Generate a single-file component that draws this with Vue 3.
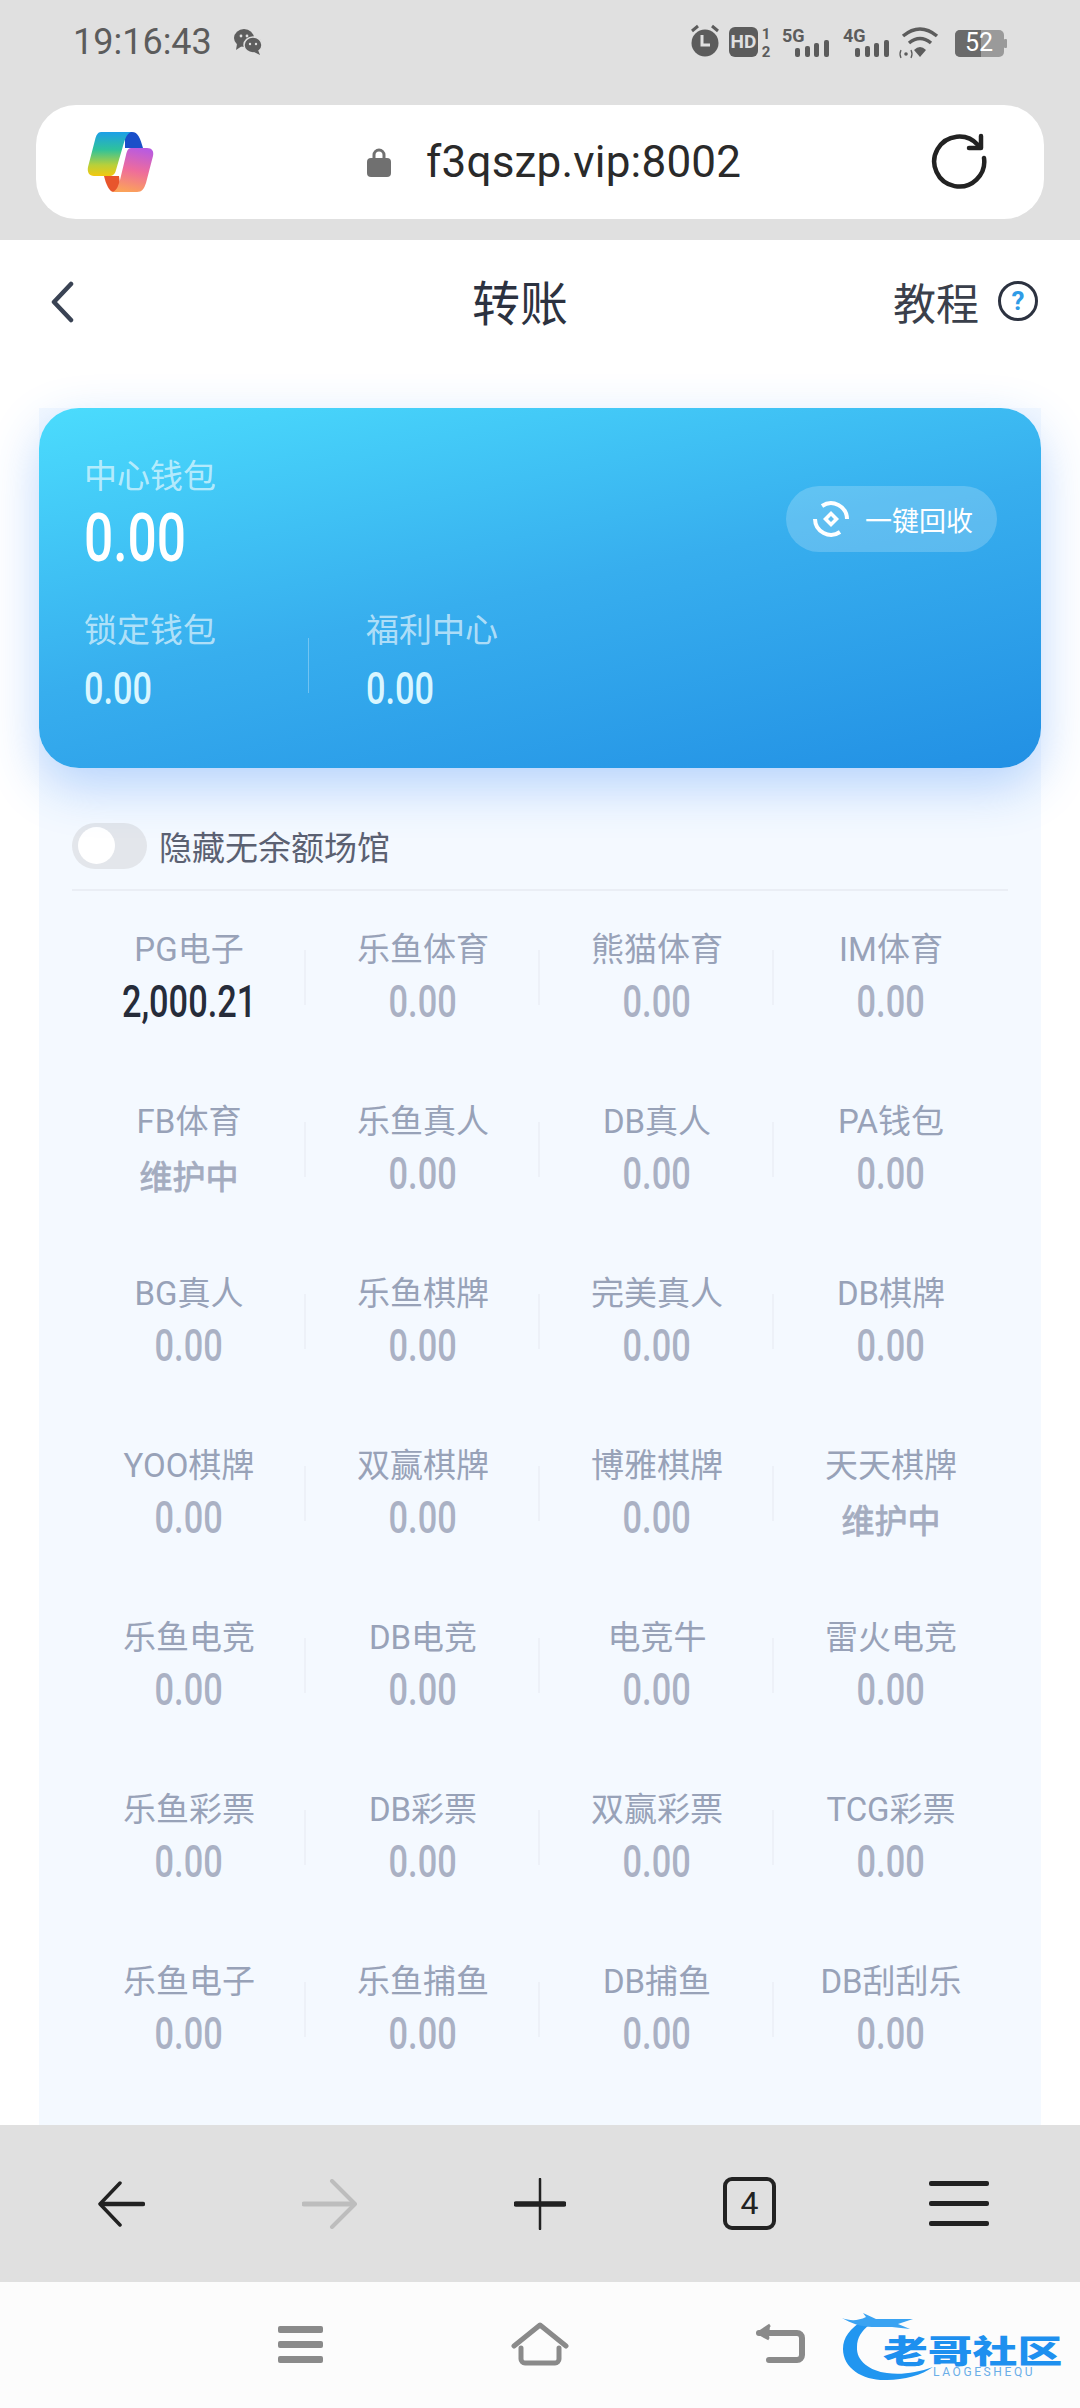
<template>
  <div class="screen">
    <header class="browser-top">
      <div class="status-bar">
        <div class="status-left">
          <span class="time">19:16:43</span>
          <svg class="wechat" width="30" height="28" viewBox="0 0 30 28">
            <ellipse cx="11" cy="10" rx="10" ry="9" fill="#5e5e5e" />
            <path d="M4 16 L3 22 L9 18 Z" fill="#5e5e5e" />
            <ellipse cx="20" cy="17" rx="9" ry="8" fill="#5e5e5e" stroke="#e0e0e0" stroke-width="1.5" />
            <path d="M25 22 L27 27 L21 24 Z" fill="#5e5e5e" />
            <circle cx="8" cy="8" r="1.4" fill="#e0e0e0" />
            <circle cx="14" cy="8" r="1.4" fill="#e0e0e0" />
            <circle cx="17" cy="16" r="1.2" fill="#e0e0e0" />
            <circle cx="23" cy="16" r="1.2" fill="#e0e0e0" />
          </svg>
        </div>
        <svg class="status-icons" width="320" height="40" viewBox="0 0 320 40">
          <circle cx="15" cy="21" r="13.5" fill="#5c5c5c" />
          <path d="M12 13 V23 H20" fill="none" stroke="#e0e0e0" stroke-width="3" />
          <path d="M2 9 L8 4 M28 9 L22 4" stroke="#5c5c5c" stroke-width="3" />
          <rect x="39" y="5" width="29" height="30" rx="6" fill="#5c5c5c" />
          <text x="53.5" y="26" text-anchor="middle" class="hd">HD</text>
          <text x="76" y="17" text-anchor="middle" class="sim">1</text>
          <text x="76" y="35" text-anchor="middle" class="sim">2</text>
          <text x="92" y="20" class="net">5G</text>
          <rect x="105" y="26" width="5" height="9" rx="2" fill="#5c5c5c" />
          <rect x="115" y="24" width="5" height="11" rx="2" fill="#5c5c5c" />
          <rect x="124" y="21" width="5" height="14" rx="2" fill="#5c5c5c" />
          <rect x="134" y="18" width="5" height="17" rx="2" fill="#5c5c5c" />
          <text x="153" y="20" class="net">4G</text>
          <rect x="165" y="26" width="5" height="9" rx="2" fill="#5c5c5c" />
          <rect x="175" y="24" width="5" height="11" rx="2" fill="#5c5c5c" />
          <rect x="184" y="21" width="5" height="14" rx="2" fill="#5c5c5c" />
          <rect x="194" y="18" width="5" height="17" rx="2" fill="#5c5c5c" />
          <g fill="none" stroke="#5c5c5c" stroke-width="3.5">
            <path d="M213 14 Q230 0 247 14" />
            <path d="M219 21 Q230 12 241 21" />
          </g>
          <path d="M224 28 Q230 22 236 28 L230 35 Z" fill="#5c5c5c" />
          <circle cx="216" cy="32" r="1.8" fill="#5c5c5c" />
          <path d="M211 28 Q209 32 211 36 M221 28 Q223 32 221 36" fill="none" stroke="#5c5c5c" stroke-width="1.3" />
          <rect x="265" y="8" width="49" height="27" rx="5" fill="#9a9a9a" />
          <path d="M270 8 H291 V35 H270 a5 5 0 0 1 -5 -5 V13 a5 5 0 0 1 5 -5 Z" fill="#6a6a6a" />
          <rect x="314" y="17" width="3" height="9" rx="1" fill="#9a9a9a" />
          <text x="289" y="29" text-anchor="middle" class="batt">52</text>
        </svg>
      </div>
      <div class="url-bar">
        <svg class="copilot" width="68" height="62" viewBox="28 21 68 62">
          <defs>
            <linearGradient id="cpLeft" x1="0" y1="0" x2="0" y2="1">
              <stop offset="0" stop-color="#1c9fe8" />
              <stop offset="0.4" stop-color="#2fc29b" />
              <stop offset="0.75" stop-color="#b8d03a" />
              <stop offset="1" stop-color="#f3c80f" />
            </linearGradient>
            <linearGradient id="cpRight" x1="0.6" y1="0" x2="0.4" y2="1">
              <stop offset="0" stop-color="#b95be0" />
              <stop offset="0.5" stop-color="#ee6c9c" />
              <stop offset="1" stop-color="#fba25a" />
            </linearGradient>
          </defs>
          <path d="M66 22 H73 C79 22 81 28 84 38 H66 Z" fill="#1a4fc9" />
          <path d="M50 66 H60 L62 82 H55 C50 82 47 74 45 66 Z" fill="#e8552c" />
          <path d="M42 22 H72 C67 24 66 30 64 36 L57 60 C56 64 54 66 50 66 H35 C30 66 28 62 29 57 L36 30 C37 25 39 22 42 22 Z" fill="url(#cpLeft)" />
          <path d="M72 38 H88 C93 38 95 41 94 46 L87 73 C85 79 83 82 78 82 H53 C58 81 59 76 61 70 L67 45 C68 41 69 38 72 38 Z" fill="url(#cpRight)" />
        </svg>
        <div class="url-text">
          <svg width="26" height="30" viewBox="0 0 26 30">
            <path d="M8 13 V8 a5 5 0 0 1 10 0 V13" fill="none" stroke="#707070" stroke-width="3" />
            <rect x="1" y="11" width="24" height="19" rx="4" fill="#707070" />
          </svg>
          <span class="url">f3qszp.vip:8002</span>
        </div>
        <svg class="reload" width="58" height="58" viewBox="0 0 58 58">
          <path d="M53 25 A25 25 0 1 1 47 12" fill="none" stroke="#222" stroke-width="4.5" stroke-linecap="round" />
          <path d="M50 3 V15 H38" fill="none" stroke="#222" stroke-width="4.5" stroke-linecap="round" stroke-linejoin="round" />
        </svg>
      </div>
    </header>

    <main class="page">
      <div class="nav">
        <svg class="back" width="24" height="42" viewBox="0 0 24 42">
          <path d="M21 3 L4 21 L21 39" fill="none" stroke="#3a4354" stroke-width="4.5" stroke-linecap="round" stroke-linejoin="round" />
        </svg>
        <h1 class="title">转账</h1>
        <div class="help">
          <span>教程</span>
          <svg width="42" height="42" viewBox="0 0 42 42">
            <circle cx="21" cy="21" r="18.5" fill="none" stroke="#2c3240" stroke-width="3" />
            <text x="21" y="30" text-anchor="middle" class="help-q">?</text>
          </svg>
        </div>
      </div>

      <section class="panel">
        <div class="card">
          <div class="card-top">
            <div>
              <div class="card-label">中心钱包</div>
              <div class="card-big"><span class="num">0.00</span></div>
            </div>
            <div class="recycle">
              <svg width="38" height="38" viewBox="0 0 38 38">
                <path d="M10 6 A16 16 0 0 1 35 19" fill="none" stroke="#fff" stroke-width="4" />
                <path d="M28 32 A16 16 0 0 1 3 19" fill="none" stroke="#fff" stroke-width="4" />
                <path d="M19 11 L27 19 L19 27 L11 19 Z M19 16 L16 19 L19 22 L22 19 Z" fill="#fff" fill-rule="evenodd" />
              </svg>
              <span>一键回收</span>
            </div>
          </div>
          <div class="card-bottom">
            <div class="card-col">
              <div class="card-label">锁定钱包</div>
              <div class="card-small"><span class="num">0.00</span></div>
            </div>
            <i class="card-sep"></i>
            <div class="card-col">
              <div class="card-label">福利中心</div>
              <div class="card-small"><span class="num">0.00</span></div>
            </div>
          </div>
        </div>

        <div class="hide-row">
          <span class="toggle"><i></i></span>
          <span>隐藏无余额场馆</span>
        </div>

        <div class="venues">
          <div v-for="(v, i) in venues" :key="v.name" class="venue" :class="{ last: i % 4 === 3 }">
            <div class="venue-name">{{ v.name }}</div>
            <div v-if="v.off" class="venue-off">维护中</div>
            <div v-else class="venue-val" :class="{ active: v.amount !== '0.00' }">
              <span class="num">{{ v.amount }}</span>
            </div>
          </div>
        </div>
      </section>
    </main>

    <footer class="toolbar">
      <div class="tool">
        <svg width="48" height="46" viewBox="0 0 48 46">
          <path d="M23 2 L3 23 L23 44" fill="none" stroke="#222" stroke-width="3.5" stroke-linecap="round" stroke-linejoin="round" />
          <path d="M5 23 H46" stroke="#222" stroke-width="4.5" stroke-linecap="round" />
        </svg>
      </div>
      <div class="tool">
        <svg width="56" height="50" viewBox="0 0 56 50">
          <path d="M30 2 L53 25 L30 48" fill="none" stroke="#bdbdbd" stroke-width="4" stroke-linecap="round" stroke-linejoin="round" />
          <path d="M2 25 H50" stroke="#bdbdbd" stroke-width="5" stroke-linecap="round" />
        </svg>
      </div>
      <div class="tool">
        <svg width="52" height="52" viewBox="0 0 52 52">
          <path d="M26 1 V51" stroke="#222" stroke-width="2.5" stroke-linecap="round" />
          <path d="M2 26 H50" stroke="#222" stroke-width="5.5" stroke-linecap="round" />
        </svg>
      </div>
      <div class="tool"><span class="tab-count">4</span></div>
      <div class="tool burger"><i></i><i></i><i></i></div>
    </footer>

    <nav class="sys-nav">
      <div class="sys-item sys-burger"><i></i><i></i><i></i></div>
      <div class="sys-item">
        <svg width="58" height="44" viewBox="0 0 58 44">
          <path d="M3 24 L29 3 L55 24" fill="none" stroke="#8a8a8a" stroke-width="5" stroke-linecap="round" stroke-linejoin="round" />
          <path d="M10 26 V37 a4 4 0 0 0 4 4 H44 a4 4 0 0 0 4 -4 V26" fill="none" stroke="#8a8a8a" stroke-width="5" stroke-linecap="round" />
        </svg>
      </div>
      <div class="sys-item">
        <svg width="50" height="44" viewBox="0 0 50 44">
          <path d="M14 38 H42 a5 5 0 0 0 5 -5 V16 a5 5 0 0 0 -5 -5 H4" fill="none" stroke="#8a8a8a" stroke-width="6" stroke-linecap="round" />
          <path d="M15 3 L3 11 L14 17" fill="#8a8a8a" stroke="#8a8a8a" stroke-width="3" stroke-linejoin="round" />
        </svg>
      </div>
      <div class="watermark">
        <svg class="dragon" width="130" height="72" viewBox="0 0 130 72">
          <path d="M21 7 C8 16 1 24 1 36 C1 56 22 68 45 67 C62 67 80 62 91 54 C75 60 58 62 45 60 C28 58 14 48 15 34 C15 24 20 18 27 12 Z" fill="#2196f0" />
          <path d="M0 5 C8 8 16 8 24 4 L21 0 L34 6 L50 6 L71 6 L56 11 L68 16 L50 14 L30 14 C20 14 8 10 0 5 Z" fill="#3aa3f2" />
        </svg>
        <span class="wm-text">老哥社区</span>
        <span class="wm-sub">LAOGESHEQU</span>
      </div>
    </nav>
  </div>
</template>

<script setup>
const names = [
  'PG电子', '乐鱼体育', '熊猫体育', 'IM体育',
  'FB体育', '乐鱼真人', 'DB真人', 'PA钱包',
  'BG真人', '乐鱼棋牌', '完美真人', 'DB棋牌',
  'YOO棋牌', '双赢棋牌', '博雅棋牌', '天天棋牌',
  '乐鱼电竞', 'DB电竞', '电竞牛', '雷火电竞',
  '乐鱼彩票', 'DB彩票', '双赢彩票', 'TCG彩票',
  '乐鱼电子', '乐鱼捕鱼', 'DB捕鱼', 'DB刮刮乐'
];
const offline = ['FB体育', '天天棋牌'];

const venues = names.map((name) => ({
  name,
  amount: name === 'PG电子' ? '2,000.21' : '0.00',
  off: offline.includes(name)
}));
</script>

<style>
html, body {
  margin: 0;
  background: #fff;
}
</style>

<style scoped>
.screen {
  width: 1080px;
  height: 2408px;
  display: flex;
  flex-direction: column;
  overflow: hidden;
  font-family: Roboto, "Noto Sans CJK SC", sans-serif;
  background: #fff;
}

.browser-top {
  height: 240px;
  flex: none;
  background: #e0e0e0;
  padding: 0 36px;
  box-sizing: border-box;
}

.status-bar {
  height: 105px;
  display: flex;
  justify-content: space-between;
  align-items: flex-start;
}

.status-left {
  display: flex;
  align-items: center;
  margin: 24px 0 0 37px;
  gap: 21px;
}

.time {
  font-size: 36px;
  line-height: 36px;
  color: #5c5c5c;
}

.status-icons {
  margin: 22px 34px 0 0;
}

.hd {
  font: 700 19px Roboto, sans-serif;
  fill: #e0e0e0;
}

.sim {
  font: 700 15px Roboto, sans-serif;
  fill: #5c5c5c;
}

.net {
  font: 700 18px Roboto, sans-serif;
  fill: #5c5c5c;
}

.batt {
  font: 400 25px Roboto, sans-serif;
  fill: #fff;
}

.url-bar {
  height: 114px;
  background: #fff;
  border-radius: 40px;
  position: relative;
  display: flex;
  align-items: center;
  justify-content: space-between;
  padding: 0 55px 0 51px;
}

.url-text {
  display: flex;
  align-items: center;
  gap: 34px;
  margin-left: 211px;
  margin-right: auto;
}

.url {
  font-size: 44px;
  color: #2a2a2a;
  letter-spacing: 0.2px;
}

.page {
  flex: 1;
  min-height: 0;
  overflow: hidden;
}

.nav {
  height: 124px;
  display: flex;
  align-items: center;
  padding: 0 41px 0 50px;
  box-sizing: border-box;
}

.title {
  margin: 0 0 5px 398px;
  font-size: 48px;
  font-weight: 400;
  color: #2c3240;
}

.help {
  margin: 0 0 3px auto;
  display: flex;
  align-items: center;
  gap: 18px;
  font-size: 43px;
  color: #3a3f4b;
}

.help-q {
  font: 700 26px Roboto, sans-serif;
  fill: #2f9be6;
}

.panel {
  margin: 44px 39px 0;
  background: #f4f9ff;
  height: 1760px;
  padding-bottom: 40px;
}

.card {
  height: 360px;
  box-sizing: border-box;
  padding: 45px 45px 0;
  border-radius: 40px;
  background: linear-gradient(168deg, #4bdcfd 0%, #37aeee 50%, #2290e4 100%);
  box-shadow: 0 18px 50px rgba(50, 130, 245, 0.32);
  position: relative;
}

.card-top {
  display: flex;
  justify-content: space-between;
  align-items: flex-start;
}

.card-label {
  font-size: 33px;
  line-height: 48px;
  color: rgba(255, 255, 255, 0.62);
}

.card-big {
  font-size: 66px;
  line-height: 76px;
  font-weight: 500;
  color: #fff;
}

.num {
  display: inline-block;
  transform: scaleX(0.78);
}

.card-big .num,
.card-small .num {
  transform-origin: left center;
}

.recycle {
  margin: 33px -1px 0 0;
  width: 211px;
  height: 66px;
  box-sizing: border-box;
  padding-left: 26px;
  border-radius: 33px;
  background: rgba(255, 255, 255, 0.2);
  display: flex;
  align-items: center;
  gap: 15px;
  font-size: 27px;
  color: #fff;
}

.card-bottom {
  display: flex;
  margin-top: 30px;
}

.card-col {
  width: 224px;
}

.card-col:last-child {
  width: auto;
}

.card-small {
  font-size: 44px;
  line-height: 56px;
  font-weight: 500;
  margin-top: 6px;
  color: #d9f6ff;
}

.card-sep {
  width: 1px;
  height: 55px;
  margin: 31px 57px 0 0;
  background: rgba(255, 255, 255, 0.3);
}

.hide-row {
  margin: 0 33px;
  height: 123px;
  box-sizing: border-box;
  padding-top: 34px;
  border-bottom: 2px solid #eaeef5;
  display: flex;
  align-items: center;
  gap: 12px;
  font-size: 33px;
  color: #5b6172;
}

.toggle {
  width: 75px;
  height: 46px;
  border-radius: 23px;
  background: #e3e6eb;
  display: flex;
  align-items: center;
  padding-left: 6px;
  box-sizing: border-box;
}

.toggle i {
  display: block;
  width: 37px;
  height: 37px;
  border-radius: 50%;
  background: #fff;
}

.venues {
  margin: 0 33px;
  display: grid;
  grid-template-columns: repeat(4, 234px);
  grid-auto-rows: 172px;
}

.venue {
  position: relative;
  text-align: center;
  padding-top: 36px;
  box-sizing: border-box;
  color: #98a2b8;
}

.venue:not(.last)::after {
  content: "";
  position: absolute;
  right: 0;
  top: 59px;
  width: 2px;
  height: 55px;
  background: #edf1f8;
}

.venue-name {
  font-size: 33px;
  line-height: 46px;
}

.venue-val {
  font-size: 44px;
  line-height: 56px;
  font-weight: 500;
  margin-top: 1px;
  color: #aab1c4;
}

.venue-val.active {
  color: #262c3a;
}

.venue-off {
  font-size: 33px;
  line-height: 56px;
  margin-top: 5px;
  color: #a4acbf;
  -webkit-text-stroke: 0.8px #a4acbf;
}

.toolbar {
  height: 157px;
  flex: none;
  background: #e0e0e0;
  padding: 0 16px;
  display: flex;
  align-items: center;
}

.tool {
  flex: 1;
  display: flex;
  flex-direction: column;
  align-items: center;
  justify-content: center;
}

.tab-count {
  width: 53px;
  height: 53px;
  box-sizing: border-box;
  border: 4px solid #222;
  border-radius: 9px;
  font-size: 32px;
  line-height: 45px;
  text-align: center;
  color: #222;
}

.burger {
  gap: 15px;
}

.burger i {
  display: block;
  width: 60px;
  height: 5px;
  border-radius: 2px;
  background: #222;
}

.sys-nav {
  height: 126px;
  flex: none;
  background: #fcfcfc;
  padding: 0 180px;
  display: flex;
  align-items: center;
  position: relative;
}

.sys-item {
  flex: 1;
  display: flex;
  flex-direction: column;
  align-items: center;
  justify-content: center;
  margin-top: -2px;
}

.sys-burger {
  gap: 8px;
}

.sys-burger i {
  display: block;
  width: 45px;
  height: 7px;
  border-radius: 2px;
  background: #8a8a8a;
}

.watermark {
  position: absolute;
  left: 842px;
  top: 31px;
  width: 230px;
  height: 68px;
}

.dragon {
  position: absolute;
  left: 0;
  top: 0;
}

.wm-text {
  position: absolute;
  left: 41px;
  top: 19px;
  font: 900 32px/34px "Noto Sans CJK SC", sans-serif;
  color: #1e90ef;
  white-space: nowrap;
  transform: scaleX(1.4);
  transform-origin: left center;
}

.wm-sub {
  position: absolute;
  left: 91px;
  top: 52px;
  font: 400 12px/14px Roboto, sans-serif;
  letter-spacing: 2.6px;
  color: #6aaee8;
}
</style>
